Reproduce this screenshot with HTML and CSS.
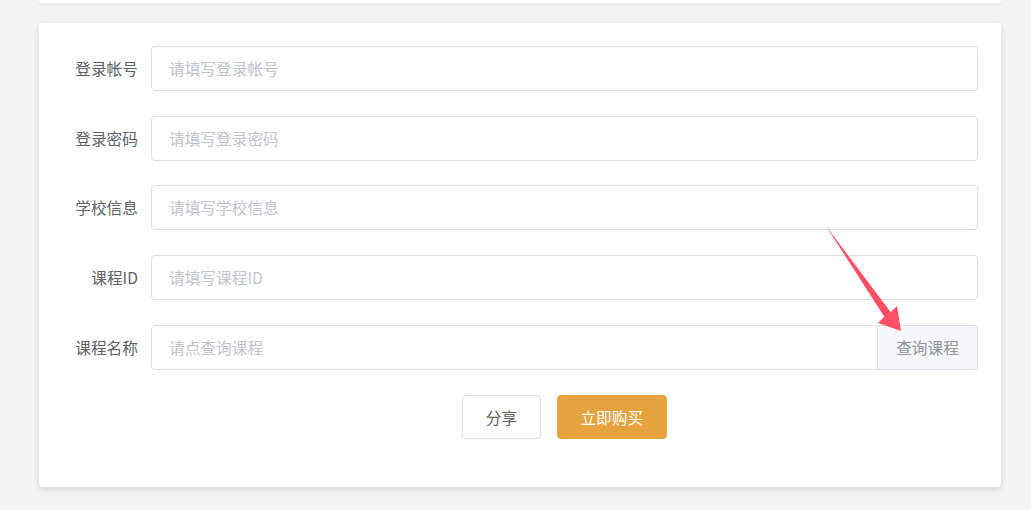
FILE: index.html
```html
<!DOCTYPE html>
<html lang="zh">
<head>
<meta charset="utf-8">
<title>课程购买</title>
<link rel="stylesheet" href="styles.css">
</head>
<body>
<div class="page">
  <div class="top-card"></div>
  <div class="card">
    <form class="form">
      <div class="row">
        <label class="label">登录帐号</label>
        <div class="input"><input type="text" placeholder="请填写登录帐号"></div>
      </div>
      <div class="row">
        <label class="label">登录密码</label>
        <div class="input"><input type="text" placeholder="请填写登录密码"></div>
      </div>
      <div class="row">
        <label class="label">学校信息</label>
        <div class="input"><input type="text" placeholder="请填写学校信息"></div>
      </div>
      <div class="row">
        <label class="label">课程ID</label>
        <div class="input"><input type="text" placeholder="请填写课程ID"></div>
      </div>
      <div class="row">
        <label class="label">课程名称</label>
        <div class="input group">
          <input type="text" placeholder="请点查询课程">
          <span class="append">查询课程</span>
        </div>
      </div>
      <div class="row actions">
        <div class="label"></div>
        <div class="buttons">
          <button type="button" class="btn">分享</button>
          <button type="button" class="btn warning">立即购买</button>
        </div>
      </div>
    </form>
  </div>
</div>
<svg class="arrow" width="1031" height="510" viewBox="0 0 1031 510">
  <polygon points="826,226 890.7,312.2 897,306 901,331 878,323 884.3,316.8" fill="#ff4f64"/>
</svg>
</body>
</html>
```

FILE: styles.css
```css
* { box-sizing: border-box; }
html, body {
  margin: 0;
  padding: 0;
  background: #f3f3f3;
  font-family: "Noto Sans CJK SC", "Noto Sans", sans-serif;
}
.page {
  padding: 0 30px 0 39px;
  width: 1031px;
  height: 510px;
  overflow: hidden;
}
.top-card {
  width: 962px;
  height: 3px;
  background: #fff;
  border-radius: 0 0 4px 4px;
  box-shadow: 0 1px 4px rgba(0, 0, 0, 0.08);
}
.card {
  margin-top: 20px;
  width: 962px;
  background: #fff;
  border-radius: 4px;
  box-shadow: 0 2px 6px rgba(0, 0, 0, 0.12);
  padding: 23px 23px 48px 0;
}
.form {
  display: flex;
  flex-direction: column;
  gap: 24.95px;
}
.row {
  display: flex;
  align-items: center;
  height: 44.8px;
}
.label {
  width: 112px;
  flex: none;
  padding-right: 13px;
  text-align: right;
  font-size: 15.7px;
  color: #606266;
}
.input {
  flex: 1;
  height: 44.8px;
  display: flex;
  border: 1px solid #dcdfe6;
  border-radius: 4px;
  overflow: hidden;
  background: #fff;
}
.input input {
  flex: 1;
  border: 0;
  outline: 0;
  padding: 0 17px;
  font-family: inherit;
  font-size: 15.7px;
  color: #606266;
  background: transparent;
  min-width: 0;
}
.input input::placeholder {
  color: #c0c4cc;
}
.append {
  width: 100px;
  flex: none;
  display: flex;
  align-items: center;
  justify-content: center;
  background: #f5f7fa;
  border-left: 1px solid #dcdfe6;
  color: #909399;
  font-size: 15.7px;
}
.buttons {
  flex: 1;
  display: flex;
  justify-content: center;
  gap: 16px;
}
.btn {
  height: 44px;
  padding: 0 22.6px;
  border: 1px solid #dcdfe6;
  border-radius: 4px;
  background: #fff;
  color: #606266;
  font-family: inherit;
  font-size: 15.7px;
  cursor: pointer;
}
.btn.warning {
  background: #e6a23c;
  border-color: #e6a23c;
  color: #fff;
}
.arrow {
  position: absolute;
  left: 0;
  top: 0;
  pointer-events: none;
}
```
